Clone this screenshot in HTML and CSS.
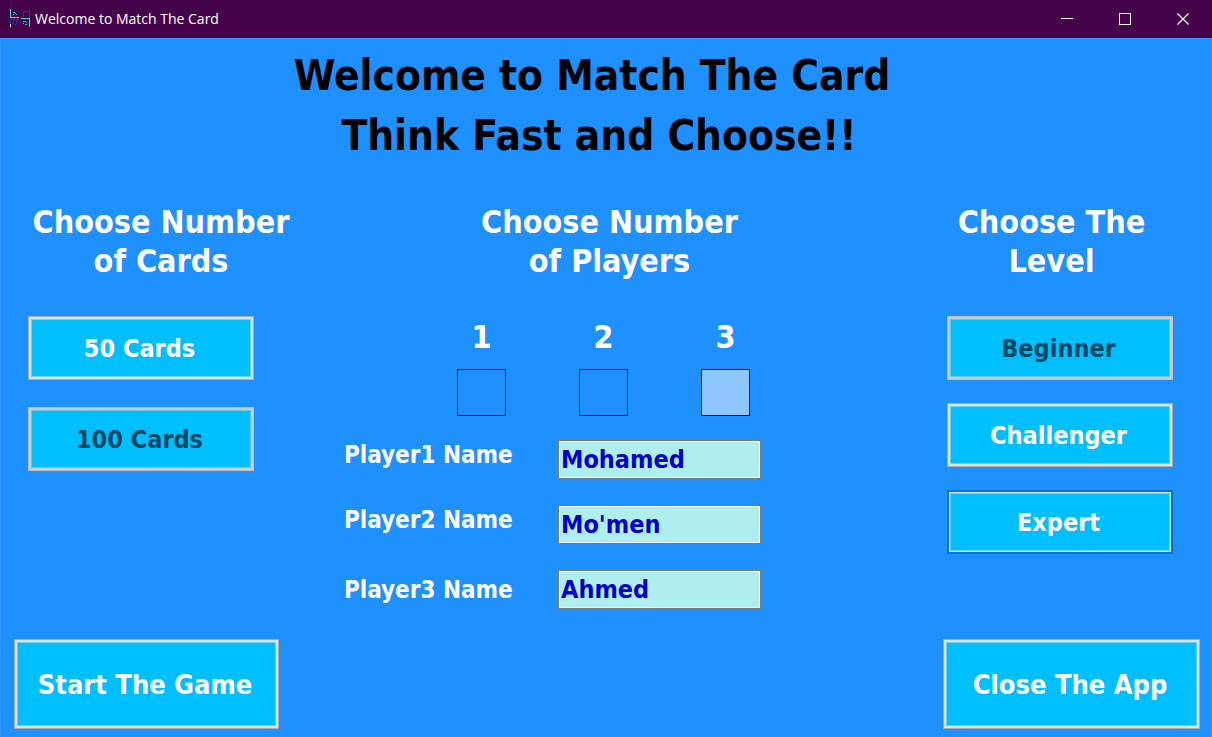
FILE: index.html
```html
<!DOCTYPE html>
<html lang="en">
<head>
<meta charset="utf-8">
<meta name="viewport" content="width=device-width, initial-scale=1">
<title>Welcome to Match The Card</title>
<link rel="stylesheet" href="styles.css">
</head>
<body>
<div class="window">
  <header class="titlebar">
    <svg class="app-icon" width="20" height="20" viewBox="0 0 20 20" fill="none" shape-rendering="crispEdges" aria-hidden="true">
      <path d="M0 0h1v8h8v1H0z" fill="#2fe0c4"/>
      <path d="M19 0h1v8h-1zM13 2h4v1h-4zM13 3h1v5h-1z" fill="#1438c8"/>
      <path d="M11 9h9v9h-1v-8h-8z" fill="#2fe0c4"/>
      <path d="M0 10h9v1H0zM0 11h1v4H0z" fill="#1438c8"/>
      <path d="M0 15h1v3H0z" fill="#fff"/>
      <path d="M3 3h2v1H3zM5 4h1v1H5zM3 5h1v1H3zM6 5h1v1H6zM13 12h3v1h-3zM16 13h1v1h-1zM13 14h1v1h-1zM15 15h2v1h-2z" fill="#2bc4b4"/>
      <path d="M3 12h1v3H3zM4 15h2v1H4zM6 12h1v3H6z" fill="#1438c8"/>
    </svg>
    <span class="titlebar-text">Welcome to Match The Card</span>
    <div class="window-controls">
      <button class="control" type="button" aria-label="Minimize"><svg width="12" height="12" viewBox="0 0 12 12" fill="none" stroke="#fff" shape-rendering="crispEdges"><path d="M0 5.500h12"/></svg></button>
      <button class="control" type="button" aria-label="Maximize"><svg width="12" height="12" viewBox="0 0 12 12" fill="none" stroke="#fff" shape-rendering="crispEdges"><path d="M.5.5h11v11H.5z"/></svg></button>
      <button class="control" type="button" aria-label="Close"><svg width="12" height="12" viewBox="0 0 12 12" fill="none" stroke="#fff" stroke-width="1.200"><path d="M.5.5l11 11M11.500.5l-11 11"/></svg></button>
    </div>
  </header>

  <main class="content">
    <div class="banner">
      <h1 class="banner-title">Welcome to Match The Card</h1>
      <p class="banner-tagline">Think Fast and Choose!!</p>
    </div>

    <div class="options">
      <section class="cards">
        <h2 class="heading">Choose Number<br>of Cards</h2>
        <div class="choices choices-cards">
          <button class="button" type="button">50 Cards</button>
          <button class="button" type="button" disabled>100 Cards</button>
        </div>
      </section>

      <section class="players">
        <h2 class="heading">Choose Number<br>of Players</h2>
        <div class="counts">
          <label class="count">1<input class="count-box" type="radio" name="players" value="1"></label>
          <label class="count">2<input class="count-box" type="radio" name="players" value="2"></label>
          <label class="count">3<input class="count-box" type="radio" name="players" value="3" checked></label>
        </div>
        <div class="names">
          <label class="name-label" for="player1">Player1 Name</label>
          <input class="name-input" id="player1" type="text" value="Mohamed">
          <label class="name-label" for="player2">Player2 Name</label>
          <input class="name-input" id="player2" type="text" value="Mo'men">
          <label class="name-label name-label-last" for="player3">Player3 Name</label>
          <input class="name-input" id="player3" type="text" value="Ahmed">
        </div>
      </section>

      <section class="levels">
        <h2 class="heading">Choose The<br>Level</h2>
        <div class="choices choices-levels">
          <button class="button" type="button" disabled>Beginner</button>
          <button class="button" type="button">Challenger</button>
          <button class="button button-default" type="button">Expert</button>
        </div>
      </section>
    </div>

    <div class="actions">
      <button class="button button-large button-start" type="button">Start The Game</button>
      <button class="button button-large button-close" type="button">Close The App</button>
    </div>
  </main>
</div>
</body>
</html>
```
FILE: styles.css
```css
* {
  box-sizing: border-box;
}

body {
  margin: 0;
  color: #fff;
  background: #1e90ff;
  font-family: Tahoma, "DejaVu Sans Condensed", "DejaVu Sans", sans-serif;
  font-weight: bold;
}

button,
input {
  font: inherit;
}

h1,
h2,
p {
  margin: 0;
}

.window {
  display: flex;
  flex-direction: column;
  min-height: 100vh;
}

.titlebar {
  display: flex;
  align-items: center;
  height: 38px;
  padding-left: 10px;
  background: #450449;
  font-family: "Segoe UI", "Open Sans", sans-serif;
  font-size: 14px;
  font-weight: normal;
}

.app-icon {
  flex: none;
}

.titlebar-text {
  padding: 0 0 2px 5px;
}

.window-controls {
  display: flex;
  align-self: stretch;
  margin-left: auto;
}

.control {
  display: grid;
  place-items: center;
  width: 58px;
  padding: 0;
  border: 0;
  background: none;
}

.content {
  display: flex;
  flex: 1;
  flex-direction: column;
  padding: 7px 11px 8px 13px;
  border: 1px solid #3399ff;
  border-bottom: 0;
}

.banner {
  color: #000;
  font-size: 42px;
  line-height: 60px;
  text-align: center;
}

.banner-title {
  padding-right: 30px;
  font-size: inherit;
}

.banner-tagline {
  padding-right: 16px;
}

.options {
  display: grid;
  grid-template-columns: 294px 1fr 257px;
  padding-top: 37px;
}

.heading {
  font-size: 32px;
  line-height: 39px;
  text-align: center;
  white-space: nowrap;
}

.levels .heading {
  padding-right: 40px;
}

.choices {
  display: flex;
  flex-direction: column;
  align-items: flex-start;
  padding-top: 35px;
}

.choices-cards {
  gap: 27px;
  padding-left: 14px;
}

.choices-levels {
  gap: 23px;
  padding-left: 4px;
}

.button {
  width: 226px;
  height: 64px;
  padding: 0 3px 0 0;
  border: 1px solid #adadad;
  box-shadow: inset 0 0 0 2px #e1e1e1, inset 0 0 0 3px #70d0f0;
  background: #00bfff;
  color: #fff;
  font-size: 25px;
}

.button:disabled {
  border-color: #bfbfbf;
  box-shadow: inset 0 0 0 2px #ccc, inset 0 0 0 3px #66c6e6;
  color: #00485f;
}

.button-default {
  border: 2px solid #0078d7;
  box-shadow: inset 0 0 0 1px #e1e1e1, inset 0 0 0 2px #70d0f0;
}

.players {
  display: flex;
  flex-direction: column;
  align-items: center;
  padding-right: 32px;
}

.counts {
  display: flex;
  gap: 73px;
  padding: 37px 12px 0 0;
}

.count {
  display: flex;
  flex-direction: column;
  align-items: center;
  gap: 12px;
  font-size: 32px;
  line-height: 39px;
}

.count-box {
  width: 49px;
  height: 47px;
  margin: 0;
  border: 1px solid #000;
  appearance: none;
}

.count-box:checked {
  background: #8ec7ff;
}

.names {
  display: grid;
  grid-template-columns: 214px 203px;
  gap: 26px 0;
  padding: 24px 114px 0 0;
}

.name-label {
  font-size: 24px;
  line-height: 30px;
}

.name-label-last {
  align-self: center;
}

.name-input {
  width: 100%;
  height: 39px;
  padding: 0 2px;
  border: 1px solid #7a7a7a;
  box-shadow: inset 0 0 0 1px #fff;
  background: #afeeee;
  color: #0000cd;
  font-size: 25px;
}

.actions {
  display: flex;
  justify-content: space-between;
  margin-top: auto;
}

.button-large {
  height: 90px;
  font-size: 27px;
}

.button-start {
  width: 265px;
}

.button-close {
  width: 257px;
}
```
